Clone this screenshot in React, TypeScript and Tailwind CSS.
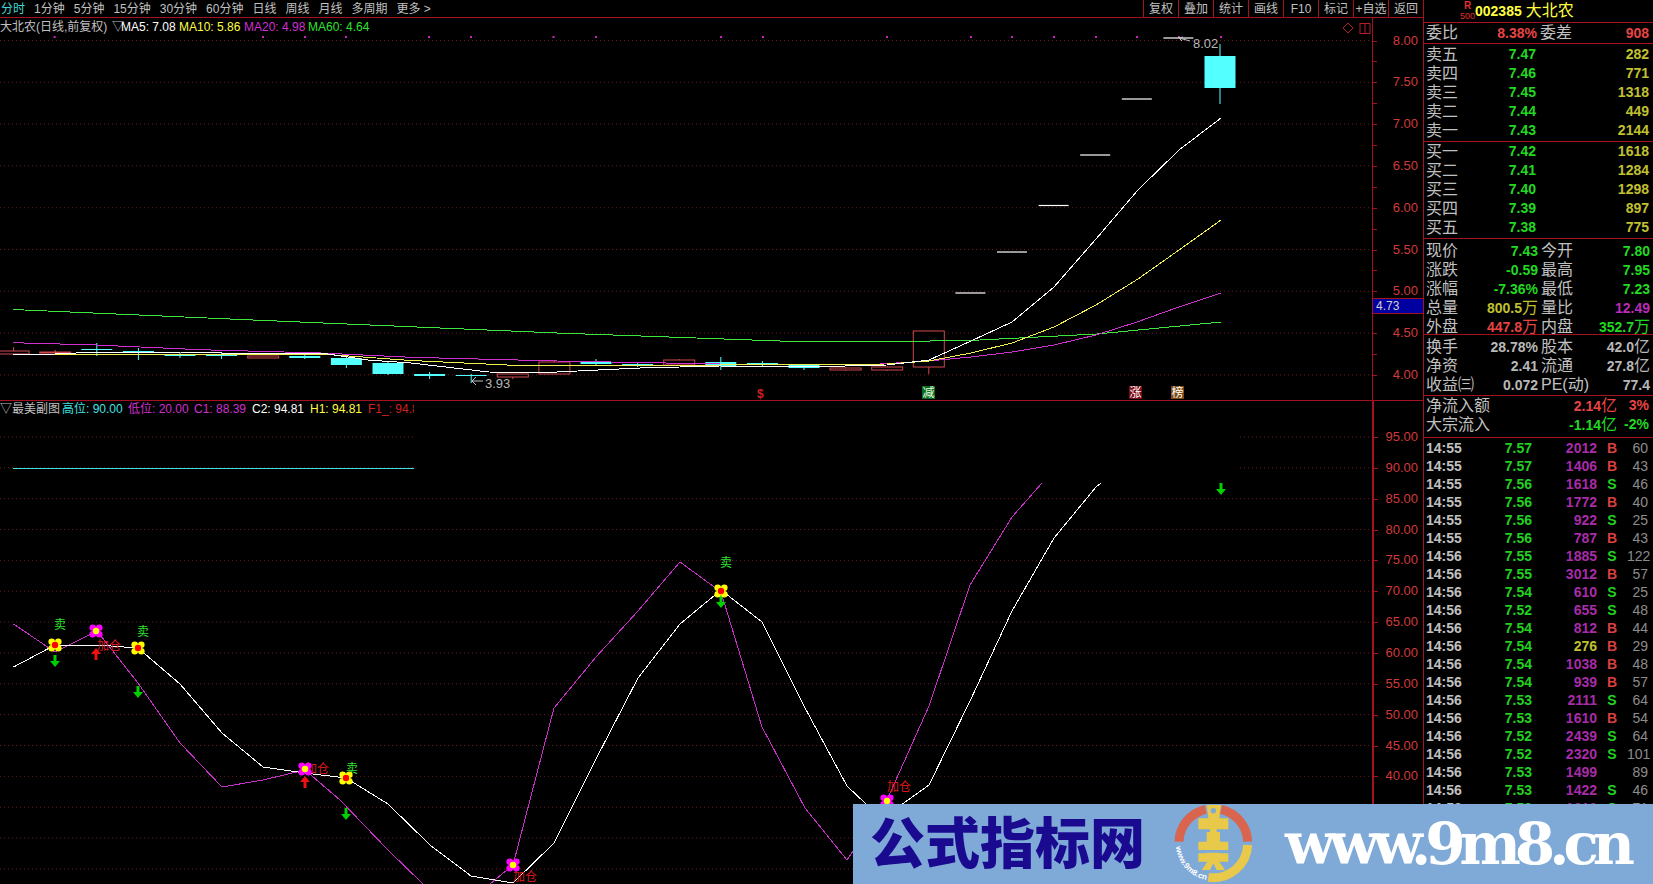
const periods = ["1分钟", "5分钟", "15分钟", "30分钟", "60分钟", "日线", "周线", "月线", "多周期", "更多 >"];
const tools = ["复权", "叠加", "统计", "画线", "F10", "标记", "+自选", "返回"];

const sells = [
  ["卖五", "7.47", "282"],
  ["卖四", "7.46", "771"],
  ["卖三", "7.45", "1318"],
  ["卖二", "7.44", "449"],
  ["卖一", "7.43", "2144"],
];
const buys = [
  ["买一", "7.42", "1618"],
  ["买二", "7.41", "1284"],
  ["买三", "7.40", "1298"],
  ["买四", "7.39", "897"],
  ["买五", "7.38", "775"],
];

const GREEN = "text-[#22d822]";
const RED = "text-[#e84444]";
const GRAY = "text-[#b8b8b8]";
const OLIVE = "text-[#c0c030]";
const PURPLE = "text-[#b82cb8]";

const quoteRows = [
  ["现价", "7.43", GREEN, "今开", "7.80", GREEN],
  ["涨跌", "-0.59", GREEN, "最高", "7.95", GREEN],
  ["涨幅", "-7.36%", GREEN, "最低", "7.23", GREEN],
  ["总量", "800.5万", OLIVE, "量比", "12.49", PURPLE],
  ["外盘", "447.8万", RED, "内盘", "352.7万", GREEN],
];
const statRows = [
  ["换手", "28.78%", GRAY, "股本", "42.0亿", GRAY],
  ["净资", "2.41", GRAY, "流通", "27.8亿", GRAY],
  ["收益㈢", "0.072", GRAY, "PE(动)", "77.4", GRAY],
];

const ticks: [string, string, string, string, string][] = [
  ["14:55", "7.57", "2012", "B", "60"],
  ["14:55", "7.57", "1406", "B", "43"],
  ["14:55", "7.56", "1618", "S", "46"],
  ["14:55", "7.56", "1772", "B", "40"],
  ["14:55", "7.56", "922", "S", "25"],
  ["14:55", "7.56", "787", "B", "43"],
  ["14:56", "7.55", "1885", "S", "122"],
  ["14:56", "7.55", "3012", "B", "57"],
  ["14:56", "7.54", "610", "S", "25"],
  ["14:56", "7.52", "655", "S", "48"],
  ["14:56", "7.54", "812", "B", "44"],
  ["14:56", "7.54", "276", "B", "29"],
  ["14:56", "7.54", "1038", "B", "48"],
  ["14:56", "7.54", "939", "B", "57"],
  ["14:56", "7.53", "2111", "S", "64"],
  ["14:56", "7.53", "1610", "B", "54"],
  ["14:56", "7.52", "2439", "S", "64"],
  ["14:56", "7.52", "2320", "S", "101"],
  ["14:56", "7.53", "1499", "", "89"],
  ["14:56", "7.53", "1422", "S", "46"],
  ["14:56", "7.52", "1610", "S", "71"],
];

// x of the n-th daily bar, y of a price on the main pane
const barX = (i: number) => 13.6 + 41.6 * i;
const priceY = (p: number) => 40.5 + (8 - p) * 83.6;
const subY = (v: number) => 437 + (95 - v) * 6.17;
const line = (pts: number[][]) => pts.map((p) => p.join(",")).join(" ");

// i, top, bottom, high, low, kind
const candles: [number, number, number, number, number, "up" | "down"][] = [
  [0, 351, 354, 347, 354, "up"],
  [1, 352, 353, 350, 355, "up"],
  [2, 349, 350, 343, 356, "down"],
  [3, 351, 352, 348, 360, "down"],
  [4, 354, 356, 352, 358, "down"],
  [5, 354, 356, 352, 359, "down"],
  [6, 356, 358, 356, 358, "up"],
  [7, 356, 358, 355, 359, "down"],
  [8, 358, 365, 357, 368, "down"],
  [9, 363, 374, 362, 375, "down"],
  [10, 374, 376, 372, 379, "down"],
  [11, 375, 376, 374, 383, "down"],
  [12, 374, 377, 374, 379, "up"],
  [13, 362, 374, 361, 374, "up"],
  [14, 362, 364, 359, 366, "down"],
  [15, 364, 365, 362, 367, "down"],
  [16, 360, 365, 359, 365, "up"],
  [17, 362, 366, 357, 370, "down"],
  [18, 363, 364, 361, 367, "down"],
  [19, 365, 368, 364, 370, "down"],
  [20, 368, 370, 367, 371, "up"],
  [21, 367, 370, 366, 371, "up"],
  [22, 331, 367, 331, 374, "up"],
  [29, 56, 88, 44, 104, "down"],
];
const limitUps = [
  [23, 293],
  [24, 252],
  [25, 205.5],
  [26, 155],
  [27, 99],
  [28, 38],
];
const dots = [54.6, 263, 305, 346, 429, 471, 553.5, 596, 721, 763, 887, 971, 1012, 1054, 1096, 1137, 1179, 1221];

const ma5 = [[13, 355], [55, 354], [97, 352], [138, 352], [180, 352], [222, 353], [321, 353], [368, 360], [411, 363], [489, 372], [528, 373], [557, 372], [640, 368], [720, 366], [804, 367], [887, 365], [929, 360], [971, 341], [1012, 322], [1054, 287], [1096, 239], [1138, 190], [1179, 150], [1221, 118]];
const ma10 = [[13, 354.5], [138, 354], [321, 354], [411, 360.5], [507, 365], [557, 365], [720, 365], [887, 364], [929, 361], [971, 353], [1012, 343], [1054, 327], [1096, 305], [1138, 279], [1179, 250], [1221, 220]];
const ma20 = [[13, 342.7], [96, 345], [200, 349.7], [321, 353], [411, 357.3], [557, 361], [720, 364], [880, 364], [929, 361], [971, 357], [1012, 352], [1054, 345], [1096, 335], [1137, 322], [1179, 307], [1221, 293]];
const ma60 = [[13, 309.5], [253, 320], [557, 333], [780, 341], [930, 341], [980, 340], [1097, 334], [1221, 322]];

const cLine = [[13.6, 667], [55, 645], [97, 645], [138, 648], [180, 684], [222, 733], [263, 767], [305, 773], [346, 778], [388, 804], [430, 845], [471, 876], [513, 883], [554, 843], [596, 759], [638, 678], [680, 624], [721, 590], [762, 622], [804, 706], [847, 786], [866, 804], [887, 815], [929, 785], [970, 701], [1012, 611], [1054, 538], [1096, 487], [1101, 483]];
const fLine = [[13.6, 624], [55, 652], [97, 631], [138, 683], [180, 743], [222, 787], [263, 780], [305, 770], [340, 800], [388, 850], [423, 884]];
const fLine2 = [[490, 884], [513, 865], [554, 708], [596, 657], [638, 611], [680, 562], [721, 592], [762, 727], [805, 808], [847, 860], [887, 800], [929, 706], [970, 585], [1012, 517], [1042, 483]];

function Curve({ pts, color }: { pts: number[][]; color: string }) {
  return <polyline points={line(pts)} fill="none" stroke={color} strokeWidth={1} shapeRendering="crispEdges" />;
}

function Flower({ x, y, kind }: { x: number; y: number; kind: "sell" | "add" }) {
  const petal = kind === "sell" ? "#ffff00" : "#ff00ff";
  const heart = kind === "sell" ? "#ff0000" : "#ffff00";
  return (
    <g>
      <circle cx={x - 3.3} cy={y - 3.3} r={3.3} fill={petal} />
      <circle cx={x + 3.3} cy={y - 3.3} r={3.3} fill={petal} />
      <circle cx={x - 3.3} cy={y + 3.3} r={3.3} fill={petal} />
      <circle cx={x + 3.3} cy={y + 3.3} r={3.3} fill={petal} />
      <rect x={x - 4} y={y - 4} width={8} height={8} fill={petal} />
      <circle cx={x} cy={y} r={3.2} fill={heart} />
    </g>
  );
}

function DownArrow({ x, y }: { x: number; y: number }) {
  return <polygon points={`${x - 1.5},${y} ${x + 1.5},${y} ${x + 1.5},${y + 6} ${x + 5},${y + 6} ${x},${y + 12} ${x - 5},${y + 6} ${x - 1.5},${y + 6}`} fill="#00d000" />;
}

function UpArrow({ x, y }: { x: number; y: number }) {
  return <polygon points={`${x},${y} ${x + 5},${y + 6} ${x + 1.5},${y + 6} ${x + 1.5},${y + 12} ${x - 1.5},${y + 12} ${x - 1.5},${y + 6} ${x - 5},${y + 6}`} fill="#f01010" />;
}

function Tag({ x, fill, color, text }: { x: number; fill: string; color: string; text: string }) {
  return (
    <g>
      <rect x={x} y={386} width={13} height={13} fill={fill} />
      <text x={x + 0.5} y={397} fontSize={12} fill={color}>
        {text}
      </text>
    </g>
  );
}

function MainChart() {
  const grid = [8, 7.5, 7, 6.5, 6, 5.5, 5, 4.5, 4];
  return (
    <svg width={1372} height={382} viewBox="0 18 1372 382" className="block">
      {grid.map((p) => (
        <line key={p} x1={0} x2={1369} y1={priceY(p)} y2={priceY(p)} stroke="#6e1a1c" strokeDasharray="1 3" />
      ))}
      {dots.map((x) => (
        <rect key={x} x={x - 1} y={36} width={2} height={2} fill="#d020c0" />
      ))}
      {candles.map(([i, top, bottom, hi, lo, kind]) => {
        const x = barX(i);
        const color = kind === "up" ? "#d0484c" : "#54ffff";
        return (
          <g key={i}>
            <line x1={x} x2={x} y1={hi} y2={lo} stroke={color} />
            <rect x={x - 15.5} y={top} width={31} height={bottom - top} fill={kind === "up" ? "#000" : color} stroke={kind === "up" ? color : "none"} />
          </g>
        );
      })}
      {limitUps.map(([i, y]) => (
        <line key={i} x1={barX(i) - 15} x2={barX(i) + 15} y1={y} y2={y} stroke="#ffffff" strokeWidth={1.2} />
      ))}
      <Curve pts={ma60} color="#3ce63c" />
      <Curve pts={ma20} color="#d030d0" />
      <Curve pts={ma10} color="#f0f050" />
      <Curve pts={ma5} color="#ffffff" />
      <path d="M1190 41 L1179 38 M1179 38 l4 -1 M1179 38 l3 3" stroke="#c0c0c0" fill="none" />
      <text x={1193} y={48} fontSize={13} fill="#b8b8b8">8.02</text>
      <path d="M483 381 L472 381 M472 381 l4 -4 M472 381 l4 4" stroke="#c0c0c0" fill="none" />
      <text x={485} y={388} fontSize={13} fill="#b8b8b8">3.93</text>
      <text x={757} y={398} fontSize={12} fontWeight={700} fill="#d02020">$</text>
      <Tag x={922} fill="#0a6a1a" color="#e8ffe8" text="减" />
      <Tag x={1129} fill="#7a0a14" color="#ffffff" text="涨" />
      <Tag x={1171} fill="#7a4a12" color="#ffffff" text="榜" />
      <polygon points="1348,23 1353,28 1348,33 1343,28" fill="none" stroke="#b02028" />
      <rect x={1360} y={23.5} width={10} height={10} fill="none" stroke="#b02028" />
      <line x1={1365} x2={1365} y1={23.5} y2={33.5} stroke="#b02028" />
    </svg>
  );
}

function SubChart() {
  const grid = [85, 80, 75, 70, 65, 60, 55, 50, 45, 40, 35, 30, 25];
  return (
    <svg width={1372} height={483} viewBox="0 401 1372 483" className="block">
      {[95, 90].map((v) => (
        <g key={v}>
          <line x1={0} x2={414} y1={subY(v)} y2={subY(v)} stroke="#6e1a1c" strokeDasharray="1 3" />
          <line x1={1240} x2={1369} y1={subY(v)} y2={subY(v)} stroke="#6e1a1c" strokeDasharray="1 3" />
        </g>
      ))}
      {grid.map((v) => (
        <line key={v} x1={0} x2={1369} y1={subY(v)} y2={subY(v)} stroke="#6e1a1c" strokeDasharray="1 3" />
      ))}
      <line x1={13} x2={414} y1={468.5} y2={468.5} stroke="#40e0e0" />
      <Curve pts={fLine} color="#c830c8" />
      <Curve pts={fLine2} color="#c830c8" />
      <Curve pts={cLine} color="#ffffff" />

      <DownArrow x={55} y={655} />
      <DownArrow x={138} y={686} />
      <DownArrow x={346} y={808} />
      <DownArrow x={721} y={596} />
      <DownArrow x={1221} y={483} />
      <UpArrow x={96} y={648} />
      <UpArrow x={305} y={776} />

      <text x={97} y={650} fontSize={12} fill="#d81818">加仓</text>
      <text x={305} y={773} fontSize={12} fill="#d81818">加仓</text>
      <text x={513} y={881} fontSize={12} fill="#d81818">加仓</text>
      <text x={887} y={791} fontSize={12} fill="#d81818">加仓</text>

      <text x={54} y={629} fontSize={12} fill="#30e030">卖</text>
      <text x={137} y={636} fontSize={12} fill="#30e030">卖</text>
      <text x={346} y={773} fontSize={12} fill="#30e030">卖</text>
      <text x={720} y={567} fontSize={12} fill="#30e030">卖</text>

      <Flower x={55} y={645} kind="sell" />
      <Flower x={138} y={648} kind="sell" />
      <Flower x={346} y={778} kind="sell" />
      <Flower x={721} y={591} kind="sell" />
      <Flower x={96} y={631} kind="add" />
      <Flower x={305} y={769} kind="add" />
      <Flower x={513} y={865} kind="add" />
      <Flower x={887} y={801} kind="add" />
    </svg>
  );
}

function Axis({ marks, labels, className }: { marks: number[]; labels: { text: string; y: number }[]; className?: string }) {
  return (
    <div className={`relative w-[51px] border-l border-[#a5121f] ${className ?? ""}`}>
      {marks.map((y) => (
        <div key={y} className="absolute left-0 h-px w-[4px] bg-[#a5121f]" style={{ top: y }} />
      ))}
      {labels.map((l) => (
        <div key={l.text} className="absolute right-[5px] text-[13px] leading-[14px] text-[#d23a3a]" style={{ top: l.y - 7 }}>
          {l.text}
        </div>
      ))}
    </div>
  );
}

// the trailing 万 / 亿 is drawn thin and larger than the bold digits
function Value({ text, className }: { text: string; className: string }) {
  const unit = /[万亿]$/.test(text) ? text.slice(-1) : "";
  const digits = unit ? text.slice(0, -1) : text;
  return (
    <span className={`text-[14px] font-bold ${className}`}>
      {digits}
      {unit && <span className="text-[16px] font-normal">{unit}</span>}
    </span>
  );
}

function QuoteRow({ row }: { row: string[] }) {
  return (
    <div className="grid h-[19px] grid-cols-[112px_112px]">
      <div className="flex items-center justify-between">
        <span className="text-[16px] text-[#c0c0c0]">{row[0]}</span>
        <Value text={row[1]} className={row[2]} />
      </div>
      <div className="flex items-center justify-between pl-[3px]">
        <span className="text-[16px] text-[#c0c0c0]">{row[3]}</span>
        <Value text={row[4]} className={row[5]} />
      </div>
    </div>
  );
}

function BookRow({ row }: { row: string[] }) {
  return (
    <div className="flex h-[19px] items-center">
      <span className="w-[32px] text-[16px] text-[#c0c0c0]">{row[0]}</span>
      <span className="w-[78px] text-right text-[14px] font-bold text-[#22d822]">{row[1]}</span>
      <span className="flex-1 text-right text-[14px] font-bold text-[#c0c030]">{row[2]}</span>
    </div>
  );
}

function TickRow({ t }: { t: [string, string, string, string, string] }) {
  return (
    <div className="grid h-[18px] grid-cols-[52px_54px_65px_30px_21px] items-center text-[14px] font-bold">
      <span className="text-[#c0c0c0]">{t[0]}</span>
      <span className="text-right text-[#22d022]">{t[1]}</span>
      <span className={`text-right ${t[2] === "276" ? "text-[#c0c030]" : "text-[#a82ca8]"}`}>{t[2]}</span>
      <span className={`text-center ${t[3] === "B" ? "text-[#d84040]" : "text-[#22d022]"}`}>{t[3]}</span>
      <span className="text-right font-normal text-[#8c8c8c]">{t[4]}</span>
    </div>
  );
}

function FlowRow({ label, amount, pct, color }: { label: string; amount: string; pct: string; color: string }) {
  return (
    <div className="flex h-[19px] items-center justify-end">
      <span className="mr-auto text-[16px] text-[#c0c0c0]">{label}</span>
      <Value text={amount} className={color} />
      <span className={`w-[32px] text-right text-[14px] font-bold ${color}`}>{pct}</span>
    </div>
  );
}

function RightPanel() {
  return (
    <div className="w-[230px] border-l border-[#a5121f]">
      <div className="flex h-[23px] items-center border-b border-[#a5121f] pl-[36px]">
        <div className="flex w-[15px] flex-col items-center text-[#e03030]">
          <span className="text-[10px] leading-[10px] font-bold">R</span>
          <span className="text-[9px] leading-[10px]">500</span>
        </div>
        <span className="text-[14px] font-bold text-[#ffff40]">002385</span>
        <span className="ml-[4px] text-[16px] leading-[20px] text-[#ffff40]">大北农</span>
      </div>
      <div className="flex h-[21px] items-center border-b border-[#a5121f] pr-[4px] pl-[2px]">
        <span className="w-[32px] text-[16px] text-[#c0c0c0]">委比</span>
        <span className="w-[79px] text-right text-[14px] font-bold text-[#e84444]">8.38%</span>
        <span className="ml-[3px] text-[16px] text-[#c0c0c0]">委差</span>
        <span className="flex-1 text-right text-[14px] font-bold text-[#e84444]">908</span>
      </div>
      <div className="border-b border-[#a5121f] pt-px pr-[4px] pb-px pl-[2px]">
        {sells.map((r) => (
          <BookRow key={r[0]} row={r} />
        ))}
      </div>
      <div className="border-b border-[#a5121f] pr-[4px] pb-px pl-[2px]">
        {buys.map((r) => (
          <BookRow key={r[0]} row={r} />
        ))}
      </div>
      <div className="border-b border-[#a5121f] pr-[4px] pl-[2px]">
        {quoteRows.map((r) => (
          <QuoteRow key={r[0]} row={r} />
        ))}
      </div>
      <div className="border-b border-[#a5121f] pr-[4px] pb-[3px] pl-[2px]">
        {statRows.map((r) => (
          <QuoteRow key={r[0]} row={r} />
        ))}
      </div>
      <div className="border-b border-[#a5121f] pr-[4px] pb-[3px] pl-[2px]">
        <FlowRow label="净流入额" amount="2.14亿" pct="3%" color={RED} />
        <FlowRow label="大宗流入" amount="-1.14亿" pct="-2%" color={GREEN} />
      </div>
      <div className="pr-[4px] pl-[2px]">
        {ticks.map((t, i) => (
          <TickRow key={i} t={t} />
        ))}
      </div>
    </div>
  );
}

function Banner() {
  return (
    <div className="absolute right-0 bottom-0 flex h-[80px] w-[800px] items-center bg-[#7fa9d7]">
      <span className="ml-[17px] w-[278px] shrink-0 text-[55px] leading-[80px] font-black text-[#1a0a90]">公式指标网</span>
      <svg width={110} height={84} viewBox="0 0 330 252" className="-mt-[4px] ml-[12px] shrink-0">
        <path d="M57 125 A103 103 0 0 1 137 28" fill="none" stroke="#d9654e" strokeWidth={27} />
        <path d="M183 28 A103 103 0 0 1 263 125" fill="none" stroke="#d9654e" strokeWidth={27} />
        <path d="M263 135 A103 103 0 0 1 145 232" fill="none" stroke="#e8c94a" strokeWidth={27} />
        <path d="M140 15 H183 L178 55 H205 V90 H180 V125 H205 V150 H180 V160 H205 V185 H178 L195 210 H170 L160 190 L150 210 H125 L142 185 H115 V160 H140 V150 H115 V125 H140 V90 H115 V55 H145 Z" fill="#e8c94a" />
        <circle cx={160} cy={32} r={8} fill="#7fa9d7" />
        <path d="M115 88 H150 V96 H115 Z M170 88 H205 V96 H170 Z M115 150 H205 V158 H115 Z" fill="#7fa9d7" />
        <path id="logo-arc" d="M48 140 A112 112 0 0 0 140 240" fill="none" />
        <text fontSize={24} fontWeight={700} fill="#ffffff">
          <textPath href="#logo-arc">www.9m8.cn</textPath>
        </text>
      </svg>
      <span className="ml-[15px] shrink-0 font-['DejaVu_Serif',serif] text-[58px] leading-[80px] font-bold tracking-[-6px] text-white">www.9m8.cn</span>
    </div>
  );
}

export default function App() {
  const mainMarks: number[] = [];
  for (let p = 8; p >= 4; p -= 0.25) mainMarks.push(priceY(p) - 18);
  const mainLabels = [8, 7.5, 7, 6.5, 6, 5.5, 5, 4.5, 4].map((p) => ({ text: p.toFixed(2), y: priceY(p) - 18 }));
  const subValues = [95, 90, 85, 80, 75, 70, 65, 60, 55, 50, 45, 40];
  const subMarks = subValues.map((v) => subY(v) - 401);
  const subLabels = subValues.map((v) => ({ text: v.toFixed(2), y: subY(v) - 401 }));

  return (
    <div className="relative flex h-[884px] w-[1653px] overflow-hidden bg-black font-['Liberation_Sans','Noto_Sans_CJK_SC',sans-serif]">
      <div className="flex w-[1423px] flex-col">
        <div className="flex h-[18px] items-center border-b border-[#a5121f] pl-px text-[12px] text-[#c0c0c0]">
          <div className="flex gap-[9px]">
            <span className="text-[#40d8d8]">分时</span>
            {periods.map((p) => (
              <span key={p}>{p}</span>
            ))}
          </div>
          <div className="ml-auto flex">
            {tools.map((t) => (
              <span key={t} className="flex h-[17px] w-[35px] items-center justify-center border-l border-[#a5121f]">
                {t}
              </span>
            ))}
          </div>
        </div>

        <div className="flex h-[383px] border-b border-[#a5121f]">
          <div className="relative w-[1372px]">
            <div className="absolute top-0 left-0 flex h-[17px] items-center text-[12px] whitespace-nowrap">
              <span className="w-[112px] shrink-0 text-[#c0c0c0]">大北农(日线,前复权)</span>
              <span className="w-[9px] shrink-0 text-[#c0c0c0]">▽</span>
              <span className="w-[58px] shrink-0 text-white">MA5: 7.08</span>
              <span className="w-[65px] shrink-0 text-[#ffff40]">MA10: 5.86</span>
              <span className="w-[64px] shrink-0 text-[#d030d0]">MA20: 4.98</span>
              <span className="shrink-0 text-[#30e030]">MA60: 4.64</span>
            </div>
            <MainChart />
          </div>
          <Axis marks={mainMarks} labels={mainLabels} />
        </div>

        <div className="flex flex-1">
          <div className="relative w-[1372px]">
            <div className="absolute top-0 left-0 flex h-[15px] w-[414px] items-center overflow-hidden text-[12px] whitespace-nowrap">
              <span className="w-[62px] shrink-0 text-[#c0c0c0]">▽最美副图</span>
              <span className="w-[66px] shrink-0 text-[#40e0e0]">高位: 90.00</span>
              <span className="w-[66px] shrink-0 text-[#d030d0]">低位: 20.00</span>
              <span className="w-[58px] shrink-0 text-[#d030d0]">C1: 88.39</span>
              <span className="w-[58px] shrink-0 text-white">C2: 94.81</span>
              <span className="w-[58px] shrink-0 text-[#ffff40]">H1: 94.81</span>
              <span className="shrink-0 text-[#d02020]">F1_: 94.81</span>
            </div>
            <SubChart />
          </div>
          <Axis marks={subMarks} labels={subLabels} className="border-l-2" />
        </div>
      </div>

      <RightPanel />

      <div className="absolute top-[298px] left-[1373px] flex h-[16px] w-[50px] items-center border-y border-[#a5121f] bg-[#0000a0] pl-[3px] text-[12px] text-[#d0d0d0]">
        4.73
      </div>
      <Banner />
    </div>
  );
}
